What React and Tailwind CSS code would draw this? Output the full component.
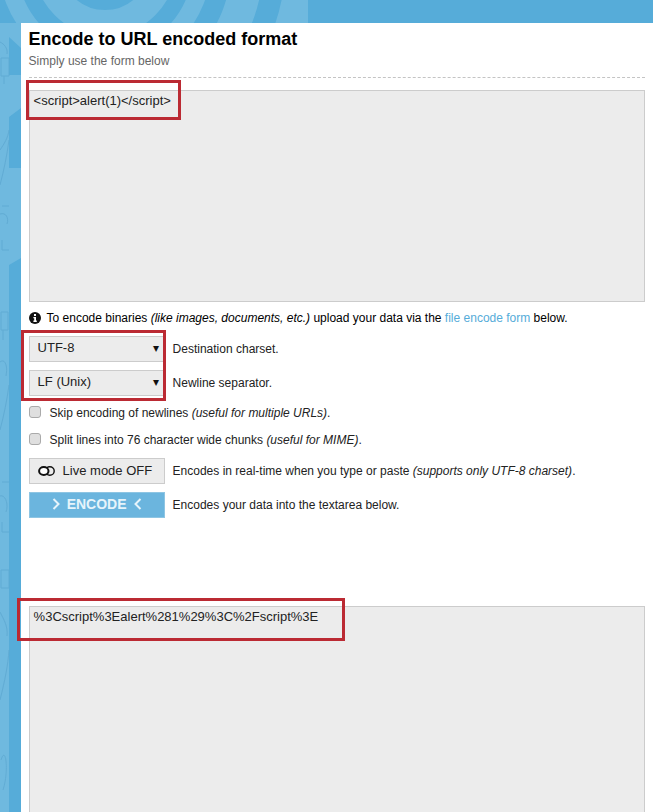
import React from "react";

function Background() {
  const doodle = "#5ea9d2";
  return (
    <svg className="absolute inset-0" width="653" height="812" viewBox="0 0 653 812" aria-hidden="true">
      <defs>
        <clipPath id="top"><rect x="0" y="0" width="308" height="23" /></clipPath>
      </defs>
      <rect width="653" height="812" fill="#56acd9" />
      <g clipPath="url(#top)" fill="none" stroke="#6fb9df">
        <circle cx="105" cy="-35" r="58" strokeWidth="26" />
        <circle cx="105" cy="-35" r="97" strokeWidth="18" />
        <circle cx="105" cy="-35" r="142" strokeWidth="32" />
        <circle cx="105" cy="-35" r="205" strokeWidth="50" />
      </g>
      <rect x="0" y="23" width="9" height="789" fill="#6fb9df" />
      <path d="M9 23H21V48L9 37Z M9 75H21V108L9 117Z M9 168H21V258L9 265Z" fill="#6fb9df" />
      <g fill="none" stroke={doodle} strokeWidth="1" opacity="0.8">
        <path d="M1 58H9V76H1Z M4 76V84 M0 42C4 44 8 48 7 54" />
        <path d="M0 150C4 144 8 138 9 130 M0 185C4 170 7 155 9 140" />
        <path d="M2 206H9 M0 214C6 212 9 218 7 224 M2 240V250H9" />
        <path d="M1 312H8V330H1Z M3 330V340 M0 362C5 358 8 366 6 376" />
        <path d="M0 430C4 415 7 400 9 385" />
        <path d="M2 482H9 M0 496C5 494 9 504 6 512 M2 522V532H9" />
        <path d="M1 570H9V588H1Z M0 612C4 620 8 626 7 636" />
        <path d="M0 700C5 680 8 665 9 650 M1 760C6 744 9 772 3 790" />
      </g>
    </svg>
  );
}

function Mark({ className }) {
  return <div className={`absolute border-[3.5px] border-[#bb2a33] pointer-events-none ${className}`} />;
}

function Select({ value }) {
  return (
    <div className="relative w-[136px] h-[26px] shrink-0">
      <select
        defaultValue={value}
        className="appearance-none block w-full h-full bg-[#ececec] border border-[#cccccc] pl-2 pb-[3px] text-[13px] text-[#222222] outline-none rounded-none"
      >
        <option>{value}</option>
      </select>
      <span className="absolute right-[6px] top-[5px] text-[12px] leading-[14px] text-[#111111]">▾</span>
    </div>
  );
}

function Check({ children }) {
  return (
    <div className="flex items-center h-[27px]">
      <input
        type="checkbox"
        className="appearance-none w-3 h-3 mt-[-2px] rounded-[3px] border border-[#aaaaaa] bg-[#dfdfdf] shrink-0"
      />
      <span className="ml-[9px] text-[12px] text-[#222222]">{children}</span>
    </div>
  );
}

export default function App() {
  return (
    <div className="relative h-[812px] overflow-hidden font-['Liberation_Sans',Arial,sans-serif]">
      <Background />
      <div className="relative ml-[21px] mt-[23px] h-[789px] bg-white pl-[7.6px] pr-2 pt-[4px]">
        <h1 className="text-[18px] leading-[24px] font-bold text-black whitespace-nowrap">Encode to URL encoded format</h1>
        <p className="text-[12px] leading-[14px] mt-[3px] text-[#666666]">Simply use the form below</p>
        <div className="mt-[9px] border-t border-dashed border-[#c4c4c4]" />
        <textarea
          readOnly
          defaultValue="<script>alert(1)</script>"
          className="block mt-3 w-full h-[212px] bg-[#ececec] border border-[#cccccc] px-1 pt-[2px] text-[13px] leading-[15px] text-[#222222] resize-none outline-none"
        />
        <div className="flex items-center h-[16px] mt-2 text-[12px] text-[#222222] whitespace-nowrap">
          <svg width="12" height="12" viewBox="0 0 12 12" className="shrink-0 mr-[6px]" aria-hidden="true">
            <circle cx="6" cy="6" r="6" fill="#111111" />
            <rect x="5" y="2" width="2" height="2" fill="#ffffff" />
            <path d="M4.4 5H7V8.6H7.8V10H4.4V8.6H5.2V6.2H4.4Z" fill="#ffffff" />
          </svg>
          <span className="text-black">
            To encode binaries <i>(like images, documents, etc.)</i> upload your data via the{" "}
            <a className="text-[#56acd9]">file encode form</a> below.
          </span>
        </div>
        <div className="flex items-center gap-2 mt-[10px]">
          <Select value="UTF-8" />
          <span className="text-[12px] text-[#222222]">Destination charset.</span>
        </div>
        <div className="flex items-center gap-2 mt-2">
          <Select value="LF (Unix)" />
          <span className="text-[12px] text-[#222222] mt-[-1px]">Newline separator.</span>
        </div>
        <div className="mt-[3px]">
          <Check>Skip encoding of newlines <i>(useful for multiple URLs)</i>.</Check>
          <Check>Split lines into 76 character wide chunks <i>(useful for MIME)</i>.</Check>
        </div>
        <div className="flex items-center gap-2 mt-[5px]">
          <button className="flex items-center w-[136px] h-[26px] bg-[#ececec] border border-[#cccccc] pl-2 text-[13px] text-[#222222] shrink-0">
            <svg width="17" height="12" viewBox="0 0 17 12" className="shrink-0 mr-2" aria-hidden="true">
              <ellipse cx="11.8" cy="6" rx="4.4" ry="4.3" fill="none" stroke="#111111" strokeWidth="1.4" />
              <ellipse cx="5.8" cy="6" rx="4.7" ry="4" fill="#ffffff" stroke="#111111" strokeWidth="2" />
            </svg>
            Live mode OFF
          </button>
          <span className="text-[12px] text-[#222222] whitespace-nowrap">
            Encodes in real-time when you type or paste <i>(supports only UTF-8 charset)</i>.
          </span>
        </div>
        <div className="flex items-center gap-2 mt-2">
          <button className="flex items-center justify-center w-[136px] h-[26px] bg-[#6bb5de] border border-[#8ec5e3] pb-[2px] text-[14px] font-bold text-[#e6f4fb] shrink-0">
            <svg width="8" height="12" viewBox="0 0 8 12" className="mr-[7px]" aria-hidden="true">
              <path d="M1.5 1L6.5 6L1.5 11" fill="none" stroke="#e6f4fb" strokeWidth="2" />
            </svg>
            ENCODE
            <svg width="8" height="12" viewBox="0 0 8 12" className="ml-[7px]" aria-hidden="true">
              <path d="M6.5 1L1.5 6L6.5 11" fill="none" stroke="#e6f4fb" strokeWidth="2" />
            </svg>
          </button>
          <span className="text-[12px] text-[#222222]">Encodes your data into the textarea below.</span>
        </div>
        <textarea
          readOnly
          defaultValue="%3Cscript%3Ealert%281%29%3C%2Fscript%3E"
          className="block mt-[88px] w-full h-[212px] bg-[#ececec] border border-[#cccccc] px-1 pt-[2px] text-[13px] leading-[15px] text-[#222222] resize-none outline-none"
        />
      </div>
      <Mark className="left-[26px] top-[80px] w-[155px] h-[40px]" />
      <Mark className="left-[21px] top-[330px] w-[145px] h-[71px]" />
      <Mark className="left-[17px] top-[598px] w-[328px] h-[43px]" />
    </div>
  );
}
